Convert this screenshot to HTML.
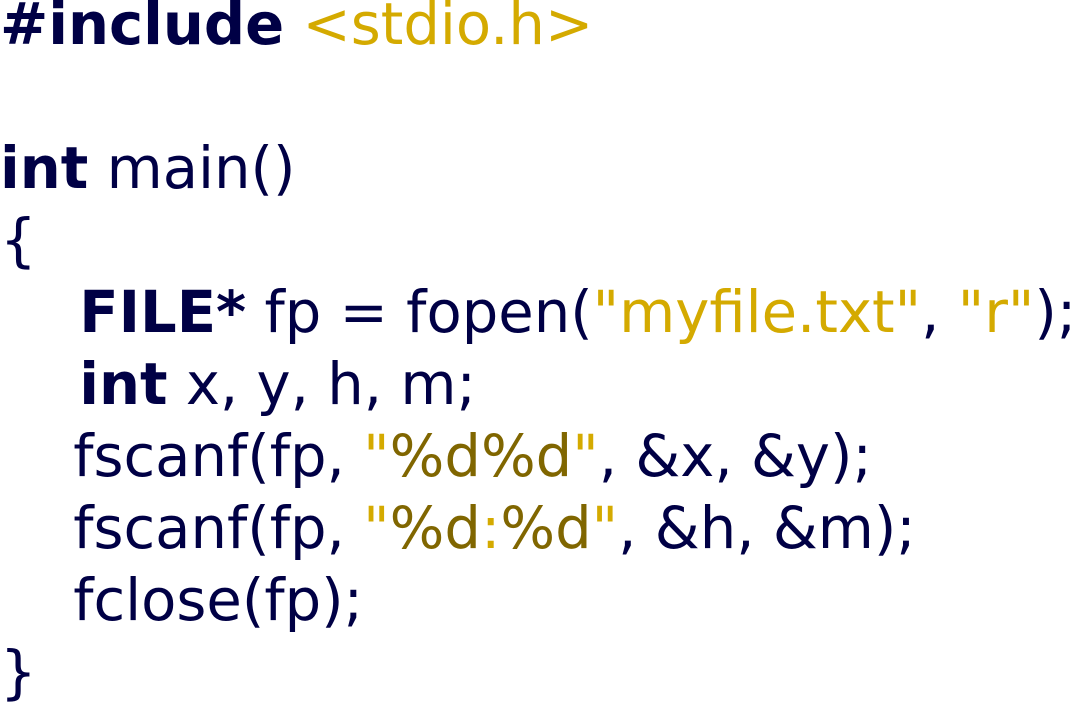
<!DOCTYPE html>
<html><head><style>
html,body{margin:0;padding:0;background:#fff;width:1070px;height:700px;overflow:hidden}
pre{margin:0;position:absolute;left:0;top:0;font-family:"DejaVu Sans",sans-serif;font-size:57.6px;line-height:72px;color:#000045;white-space:pre}
b{font-weight:bold}
.g{color:#d4aa00}.o{color:#806600}
.s{display:inline-block;width:6px}
</style></head><body>
<pre style="top:-11px"><b>#include</b> <span class="g">&lt;stdio.h&gt;</span>

<b>int</b> main()
{
    <span class="s"></span><b>FILE*</b> fp = fopen(<span class="g">"myfile.txt"</span>, <span class="g">"r"</span>);
    <span class="s"></span><b>int</b> x, y, h, m;
    fscanf(fp, <span class="g">"</span><span class="o">%d%d</span><span class="g">"</span>, &amp;x, &amp;y);
    fscanf(fp, <span class="g">"</span><span class="o">%d</span><span class="g">:</span><span class="o">%d</span><span class="g">"</span>, &amp;h, &amp;m);
    fclose(fp);
}</pre>
</body></html>
